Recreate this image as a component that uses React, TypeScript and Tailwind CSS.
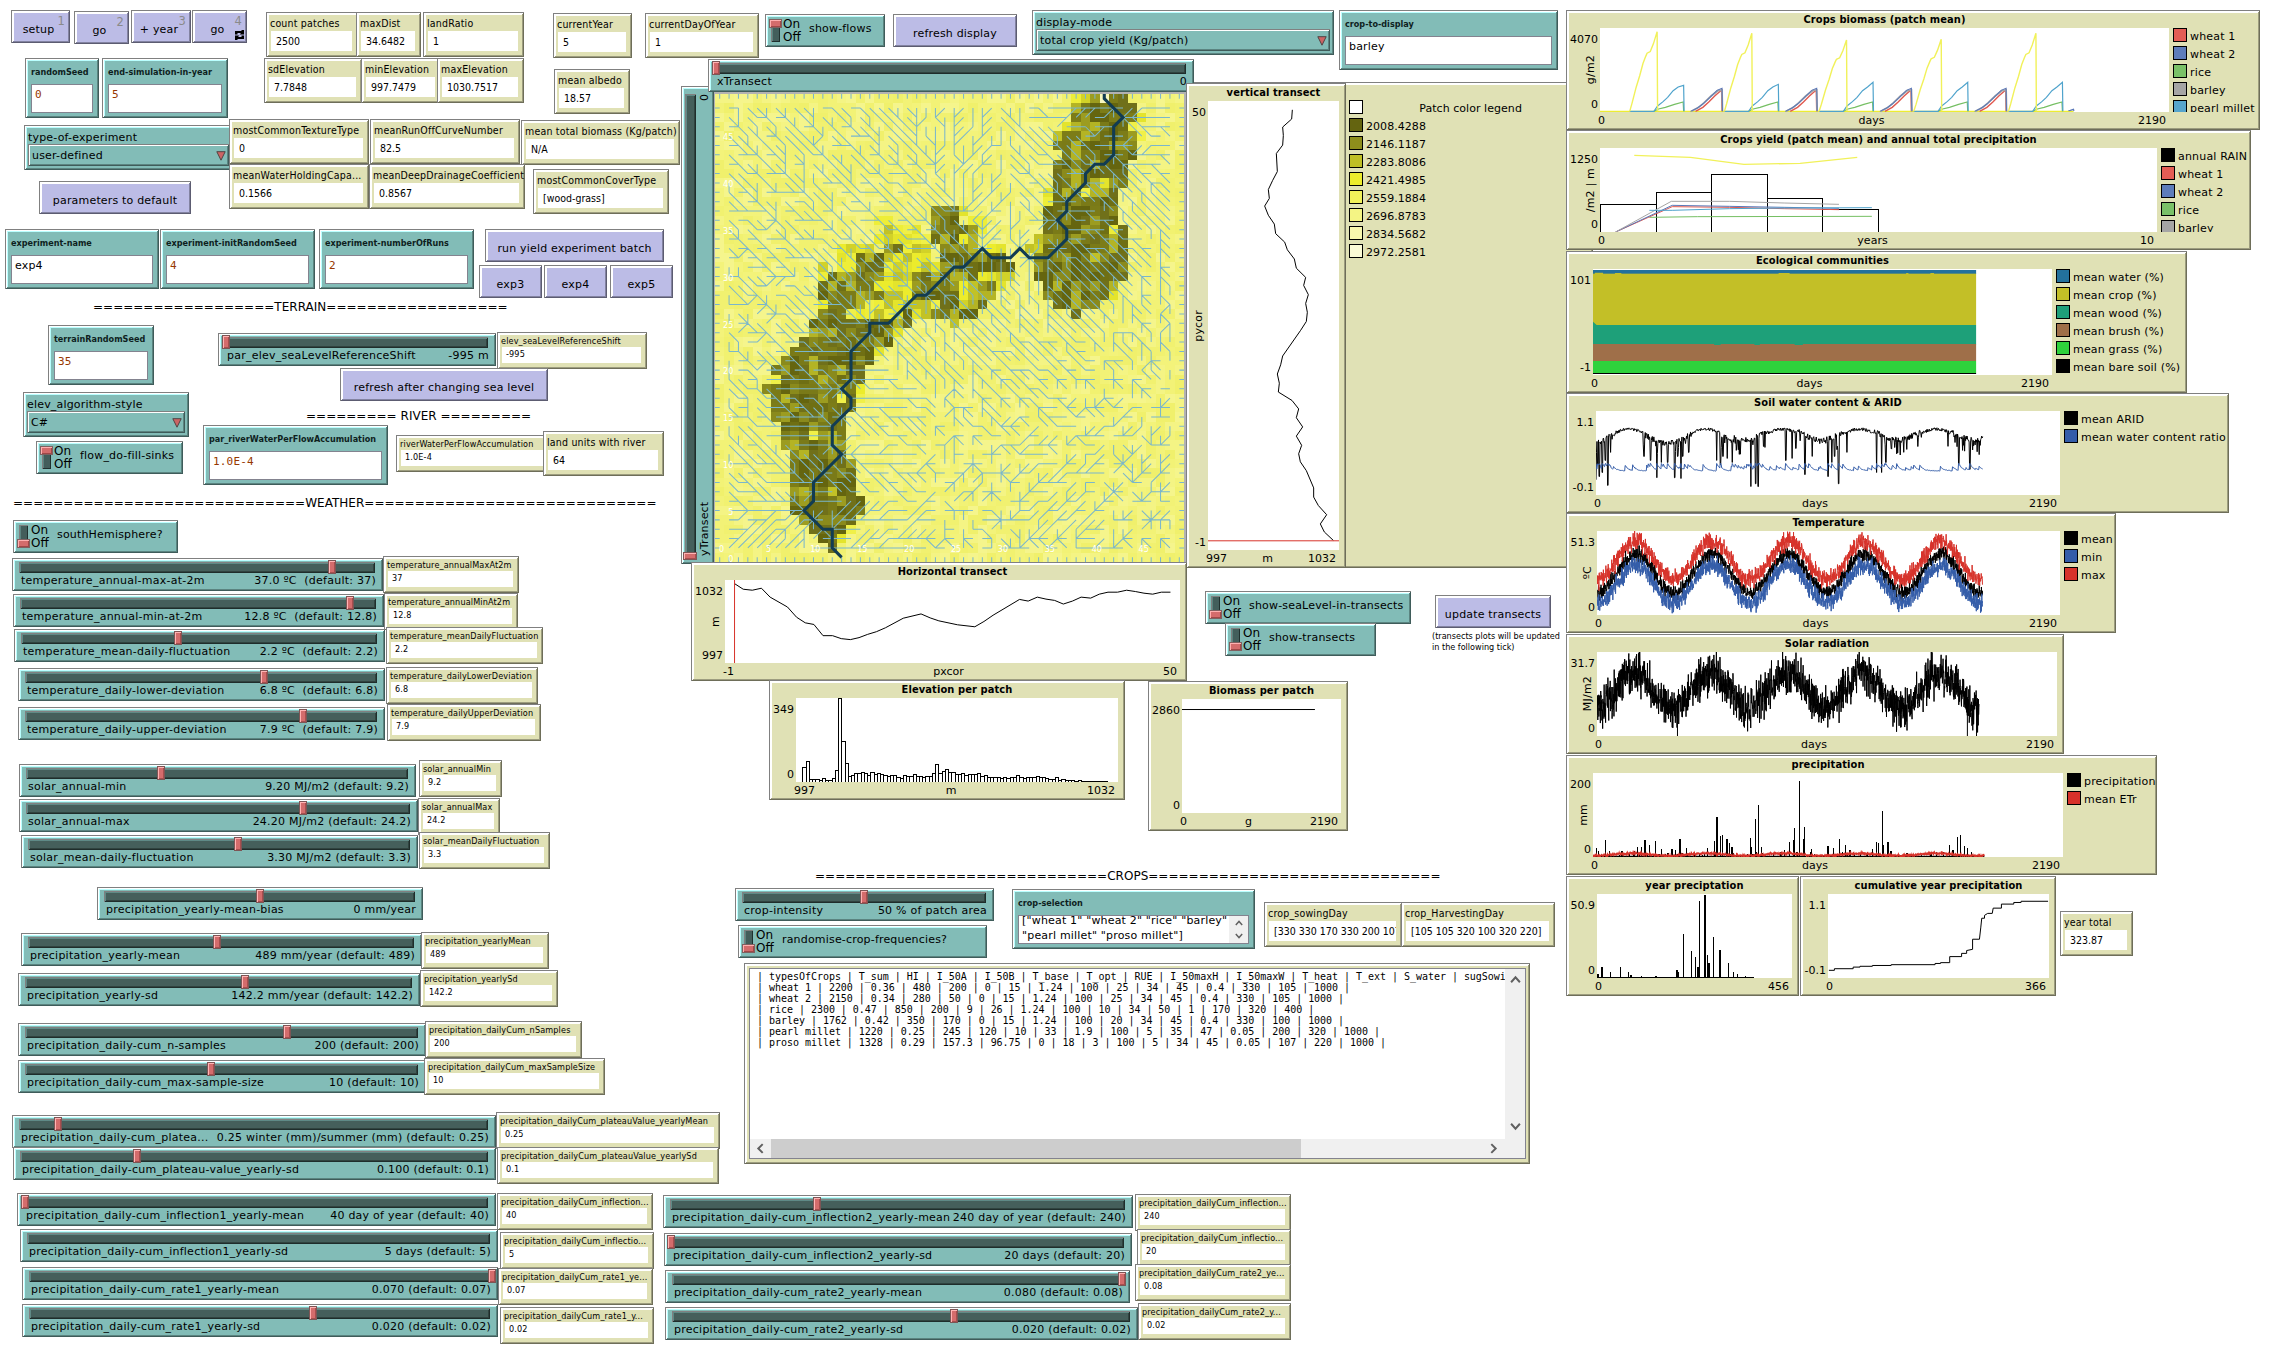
import React from "react";

const TEAL =
  "absolute bg-[#82bcb7] shadow-[inset_1px_1px_0_#808080,inset_-1px_-1px_0_#3f5c5a,inset_2px_2px_0_#ffffff,inset_-2px_-2px_0_#5b8480,inset_3px_3px_0_#baffff]";
const LILAC =
  "absolute bg-[#bcbce6] shadow-[inset_1px_1px_0_#808080,inset_-1px_-1px_0_#5c5c71,inset_2px_2px_0_#ffffff,inset_-2px_-2px_0_#8383a1,inset_3px_3px_0_#ffffff]";
const SAND =
  "absolute bg-[#e0e1b5] shadow-[inset_1px_1px_0_#808080,inset_-1px_-1px_0_#6e6e59,inset_2px_2px_0_#ffffff,inset_-2px_-2px_0_#9d9d7f,inset_3px_3px_0_#ffffff]";

type Kids = { children?: React.ReactNode };

function Button({ at, label, hotkey, loop }: { at: string; label: string; hotkey?: string; loop?: boolean }) {
  return (
    <div className={`${LILAC} ${at} flex items-center justify-center whitespace-nowrap pt-[7px]`}>
      <span className={hotkey ? "pr-1" : ""}>{label}</span>
      {hotkey && <span className="absolute right-[5px] top-[4px] text-[11.5px] text-[#8a8a8a]">{hotkey}</span>}
      {loop && (
        <svg className="absolute right-[3px] top-[20px] h-[10px] w-[9px]" viewBox="0 0 9 10">
          <path d="M0 1H6L7 0H9V4.5H4.6L6 3H2.5V4.5H0ZM9 9H3L2 10H0V5.5H4.4L3 7H6.5V5.5H9Z" fill="#000" />
        </svg>
      )}
    </div>
  );
}

function Monitor({ at, label, value, small }: { at: string; label: string; value: string; small?: boolean }) {
  return (
    <div
      className={`${SAND} ${at} flex flex-col overflow-hidden whitespace-nowrap pl-[5px] pr-[6px] font-['DejaVu_Sans_Condensed'] ${
        small ? "pt-[4px] text-[9px] leading-[11px] tracking-[0.15px]" : "pt-[4px] text-[10.5px] leading-[15px]"
      }`}
    >
      <div className={`-ml-px ${small ? "" : "tracking-[0.2px]"}`}>{label}</div>
      <div
        className={`overflow-hidden bg-white ${
          small ? "h-[16px] pl-[4px] pt-[2px]" : "h-[20px] pl-[5px] pt-[3px] tracking-normal"
        }`}
      >
        {value}
      </div>
    </div>
  );
}

function Input({ at, label, value, num }: { at: string; label: string; value: string; num?: boolean }) {
  return (
    <div className={`${TEAL} ${at} flex flex-col px-[6px] pb-[5px]`}>
      <div className="h-[26px] whitespace-nowrap pt-[8px] font-['DejaVu_Sans_Condensed'] text-[9px] font-bold leading-[13px] tracking-normal text-[#0e1f1e]">
        {label}
      </div>
      <div
        className={`flex-1 border border-[#83838f] bg-white pl-[3px] pt-[2px] leading-[15px] ${
          num ? "font-['DejaVu_Sans_Mono'] text-[11px] text-[#963700]" : "text-[11px]"
        }`}
      >
        {value}
      </div>
    </div>
  );
}

function Chooser({ at, label, value }: { at: string; label: string; value: string }) {
  return (
    <div className={`${TEAL} ${at} flex flex-col px-[4px] pb-[4px] pt-[5px]`}>
      <div className="h-[14px] leading-[16px]">{label}</div>
      <div className="flex flex-1 items-center justify-between pl-[4px] pr-[3px] pt-px shadow-[inset_1px_1px_0_#808080,inset_-1px_-1px_0_#3f5c5a,inset_2px_2px_0_#ffffff,inset_-2px_-2px_0_#5b8480]">
        <span>{value}</span>
        <svg className="h-[10px] w-[10px]" viewBox="0 0 10 10">
          <path d="M0.8 0.7H9.2L5 9.2Z" fill="#cc6464" stroke="#4f4444" strokeWidth="1" />
        </svg>
      </div>
    </div>
  );
}

function Switch({ at, label, on }: { at: string; label: string; on?: boolean }) {
  return (
    <div className={`${TEAL} ${at} flex items-center whitespace-nowrap`}>
      <div className="relative ml-[6px] h-[23px] w-[9px] bg-[#435e5b] shadow-[inset_1px_1px_0_#808080,inset_-1px_-1px_0_#20302e,inset_2px_0_0_#5b8480]">
        <div
          className={`absolute -left-[2px] h-[9px] w-[13px] border border-[#806060] bg-[#d46c6c] shadow-[inset_1px_1px_0_#ffb0b0,inset_-1px_-1px_0_#a04848] ${
            on ? "top-0" : "bottom-0"
          }`}
        />
      </div>
      <div className="ml-[3px] w-[26px] text-[12px] leading-[13px] tracking-normal">
        <div>On</div>
        <div>Off</div>
      </div>
      <span className="-mt-[3px]">{label}</span>
    </div>
  );
}

function Slider({ at, label, value, knob }: { at: string; label: string; value: string; knob?: number }) {
  return (
    <div className={`${TEAL} ${at} flex flex-col pl-[7px] pr-[8px] pt-[4px]`}>
      <div className="relative h-[11px] bg-[#455f5b] shadow-[inset_1px_1px_0_#808080,inset_-1px_-1px_0_#1f2d2b,inset_2px_2px_0_#5f8a86,inset_-2px_-2px_0_#30433f]">
        {knob !== undefined && (
          <div
            className="absolute -top-[2px] h-[14px] w-[8px] border border-[#7d5555] bg-[#d46c6c] shadow-[inset_1px_1px_0_#ffb4b4,inset_-1px_-1px_0_#a84e4e]"
            style={{ left: knob - 7 }}
          />
        )}
      </div>
      <div className="flex justify-between whitespace-pre pl-[2px] leading-[16px] tracking-[0.25px]">
        <span>{label}</span>
        <span className="-mr-px">{value}</span>
      </div>
    </div>
  );
}

function Swatches({ items, pitch }: { items: [string, string][]; pitch: string }) {
  return (
    <div className="flex h-0 min-h-full flex-col overflow-hidden pl-[4px]">
      {items.map(([c, t]) => (
        <div key={t} className={`flex shrink-0 items-start whitespace-pre ${pitch}`}>
          <span className="h-[14px] w-[14px] shrink-0 border border-black" style={{ backgroundColor: c }} />
          <span className="ml-[3px] mt-[1px] leading-[15px]">{t}</span>
        </div>
      ))}
    </div>
  );
}

type PlotProps = Kids & {
  at: string;
  cols: string;
  title: string;
  y: [string, string, string?];
  x: [string, string, string];
  box: string;
  legend?: [string, string][];
};

function Plot({ at, cols, title, y, x, box, legend, children }: PlotProps) {
  return (
    <div className={`${SAND} ${at} grid grid-rows-[18px_minmax(0,1fr)_18px] ${cols}`}>
      <div />
      <div className="flex items-end justify-center whitespace-nowrap pb-[1px] font-['DejaVu_Sans_Condensed'] text-[11px] font-bold leading-[14px] tracking-[0.1px]">
        {title}
      </div>
      <div />
      <div className="relative flex flex-col items-end justify-between whitespace-nowrap pr-[2px] pt-[5px] leading-[14px] tracking-normal">
        <span>{y[0]}</span>
        {y[2] && (
          <div className="absolute inset-y-[14px] right-[3px] flex items-center justify-center">
            <span className="rotate-180 leading-[12px] tracking-[0.2px] [writing-mode:vertical-rl]">{y[2]}</span>
          </div>
        )}
        <span>{y[1]}</span>
      </div>
      <svg className="h-full w-full bg-white" viewBox={box} preserveAspectRatio="none">
        {children}
      </svg>
      {legend ? <Swatches items={legend} pitch="h-[18px]" /> : <div />}
      <div />
      <div className="-ml-[2px] flex justify-between pr-[3px] pt-[2px] leading-[14px] tracking-normal">
        <span>{x[0]}</span>
        <span>{x[1]}</span>
        <span>{x[2]}</span>
      </div>
      <div />
    </div>
  );
}

function Pen({ pts, c = "#000", w = 1 }: { pts: string; c?: string; w?: number }) {
  return <polyline points={pts} fill="none" stroke={c} strokeWidth={w} vectorEffect="non-scaling-stroke" />;
}

function Bars({ list, base }: { list: number[][]; base: number }) {
  return (
    <g shapeRendering="crispEdges">
      {list.map(([x, y], i) => (
        <line key={i} x1={x} x2={x} y1={base} y2={y} stroke="#000" strokeWidth="1.4" vectorEffect="non-scaling-stroke" />
      ))}
    </g>
  );
}

function rng(seed: number) {
  let s = seed;
  return () => {
    s = (s * 1664525 + 1013904223) % 4294967296;
    return s / 4294967296;
  };
}

/* ---------- series ---------- */

function season(seed: number, x0: number, x1: number, peak: number, mid: number, amp: number, noise: number) {
  const r = rng(seed);
  const out: string[] = [];
  const n = 1825;
  for (let i = 0; i < n; i++) {
    const x = x0 + ((x1 - x0) * i) / n;
    const e = (r() + r() + r() - 1.5) * noise;
    out.push(`${x.toFixed(1)},${(mid - amp * Math.cos(((x - peak) / 167) * 2 * Math.PI) + e).toFixed(1)}`);
  }
  return out.join(" ");
}

const ARID_DROPS: number[][] = [
  [78, 248], [82, 210], [85, 240], [92, 230], [98, 200], [104, 262], [110, 180], [183, 190], [197, 200], [211, 243],
  [221, 205], [235, 205], [250, 243], [257, 190], [264, 245], [268, 190], [281, 180], [342, 200], [350, 210],
  [356, 190], [365, 195], [376, 205], [385, 175], [417, 265], [427, 258], [433, 265], [445, 165], [493, 200],
  [507, 195], [515, 170], [535, 235], [551, 190], [586, 240], [594, 205], [600, 190], [609, 258], [627, 180],
  [692, 230], [703, 230], [712, 205], [848, 165], [872, 208], [880, 175], [896, 222],
];

function arid() {
  const r = rng(5);
  const p: string[] = [];
  for (let x = 78; x < 924; x += 1.1) {
    const s = Math.cos(((x - 150) / 168) * 2 * Math.PI);
    const wet = s < 0.4;
    let y = 134 - 16 * s + (wet && x > 380 ? -8 : 0) + r() * (wet ? 14 : 8);
    if (wet && r() > 0.85) y += r() * 40;
    for (const [dx, dy] of ARID_DROPS) if (Math.abs(dx - x) < 0.9) y = dy;
    p.push(`${x.toFixed(1)},${y.toFixed(1)}`);
  }
  return p.join(" ");
}

function moisture() {
  const r = rng(9);
  const p: string[] = [];
  let v = 14;
  for (let x = 78; x < 924; x += 1.1) {
    const s = Math.cos(((x - 150) / 168) * 2 * Math.PI);
    v *= 0.86;
    if (r() > (s > 0.3 ? 0.95 : 0.86)) v = 6 + r() * 12;
    for (const [dx, dy] of ARID_DROPS) if (dy > 195 && Math.abs(dx - x) < 0.9) v = 18;
    p.push(`${x.toFixed(1)},${(227 - v - r() * 2).toFixed(1)}`);
  }
  return p.join(" ");
}

const RAIN: number[][] = [
  [80, 1165], [84, 1172], [99, 1145], [108, 1172], [135, 1172], [163, 1172], [169, 1163], [178, 1162], [186, 1145],
  [196, 1157], [209, 1147], [222, 1168], [245, 1168], [253, 1170], [262, 1142], [277, 1165], [322, 1165], [338, 1147],
  [342, 1088], [344, 1088], [351, 1135], [355, 1132], [365, 1142], [371, 1153], [376, 1162], [417, 1140], [419, 1163],
  [427, 1093], [434, 1058], [441, 1162], [491, 1170], [502, 1150], [511, 1145], [513, 1115], [524, 998], [532, 1142],
  [535, 1113], [550, 1168], [586, 1160], [598, 1165], [611, 1142], [624, 1158], [634, 1170], [683, 1167], [692, 1150],
  [696, 1152], [705, 1073], [708, 1157], [717, 1150], [724, 1172], [852, 1157], [859, 1170], [869, 1137], [876, 1132],
  [884, 1160], [891, 1165], [900, 1174],
];

function drizzle() {
  const r = rng(21);
  const out: number[][] = [];
  for (let x = 74; x < 920; x += 5 + r() * 12) out.push([x, 1186 - r() * 12]);
  return out;
}

const ELEVATION = [
  651, 633, 688, 688, 688, 691, 685, 691, 691, 685, 660, 444, 573, 640, 679, 676, 670, 669, 666, 669, 675, 666, 672,
  670, 673, 676, 679, 676, 676, 682, 685, 676, 679, 679, 673, 679, 680, 682, 679, 679, 670, 643, 670, 664, 657, 666,
  668, 672, 673, 670, 675, 673, 673, 673, 670, 679, 677, 681, 682, 682, 682, 685, 682, 686, 682, 682, 676, 681, 685,
  682, 681, 681, 679, 682, 681, 686, 687, 687, 682, 691, 687, 690, 691, 691, 693, 690, 693, 694, 694, 694, 694, 694,
  694, 694,
];

const GROW_PEAKS = [95, 100, 120, 118, 100];

function CropBiomass() {
  return (
    <>
      <Pen c="#eded31" pts="87,334 1123,334" w={1.4} />
      {GROW_PEAKS.map((p, k) => {
        const d = k * 207.2;
        const at = (l: number[][]) => l.map(([x, y]) => `${x + d},${y}`).join(" ");
        const q = (f: number) => 334 - (334 - p) * f;
        return (
          <g key={k}>
            {k < 4 && (
              <>
                <Pen c="#e0584f" w={1.4} pts={at([[296, 334], [312, 322], [325, 306], [338, 288], [353, 270], [354, 334]])} />
                <Pen c="#a5a5a5" w={1.8} pts={at([[287, 334], [303, 322], [315, 308], [330, 288], [345, 272], [354, 270], [355, 334]])} />
                <Pen c="#5a78b8" w={1} pts={at([[285, 334], [300, 324], [312, 312], [327, 293], [343, 271], [354, 265], [355, 334]])} />
              </>
            )}
            <Pen c="#75bf63" w={1.2} pts={at([[205, 334], [215, 327], [230, 322], [250, 313], [269, 306], [270, 334]])} />
            <Pen c="#4fa3cc" w={1.2} pts={at([[152, 334], [205, 334], [213, 318], [225, 305], [235, 292], [247, 272], [258, 261], [270, 256 - (k > 1 ? 9 : k * 3)], [271, 334]])} />
            <Pen c="#f1f15a" w={1.4} pts={at([[152, 334], [157, q(0.1)], [166, q(0.3)], [174, q(0.45)], [181, q(0.6)], [187, q(0.69)], [190, q(0.73)], [197, q(0.75)], [204, q(0.85)], [212, q(1)], [213, 334]])} />
          </g>
        );
      })}
      <Pen c="#5a78b8" w={1.2} pts="1112,332 1116,331 1123,328 1124,333" />
    </>
  );
}

/* ---------- world view ---------- */

const RIVER: number[][] = [
  [41, -0.5], [41, 0], [43, 2], [42, 3], [42, 6], [41, 7], [40, 7], [39, 8], [39, 9], [37, 11], [37, 12], [36, 13],
  [37, 14], [37, 15], [35, 17], [33, 17], [32, 16], [31, 17], [29, 17], [28, 16], [26, 18], [25, 18], [22, 21],
  [21, 21], [18, 24], [16, 24], [16, 25], [14, 27], [14, 30], [13, 31], [14, 32], [14, 33], [12, 35], [12, 37],
  [13, 38], [10, 41], [10, 43], [9, 44], [11, 46], [12, 46], [12, 48], [13, 49],
];

const COVER: Record<number, string> = {
  0: "y38-39 d40-40 w41-41 d42-43",
  1: "d38-44",
  2: "d38-44 y45-45",
  3: "y37-37 d38-43 y44-44",
  4: "y36-36 d37-44 y45-45",
  5: "d36-44",
  6: "d37-44",
  7: "d36-43",
  8: "d36-43",
  9: "d36-43 y41-41",
  10: "y35-35 d36-42 y39-39",
  11: "y35-35 d36-42",
  12: "d23-25 d35-42 y26-26",
  13: "y17-18 d23-25 y27-28 d35-42",
  14: "y18-21 d23-27 y28-28 d35-43 y42-42",
  15: "y17-22 d23-27 y26-26 y34-34 d35-43",
  16: "y13-16 d18-19 y20-22 d24-27 y29-30 y33-34 d35-43",
  17: "y13-14 d15-17 y18-22 d24-30 d34-43 y40-40",
  18: "y11-11 y13-14 d15-17 y18-23 d24-31 d34-43",
  19: "y11-11 d12-17 y18-20 d21-27 y28-31 d34-43",
  20: "d11-16 y17-20 d21-25 y26-27 d28-29 y30-30 d35-42",
  21: "d11-17 y18-20 d21-25 y26-27 d28-29 d35-42 y42-42",
  22: "y11-11 d12-15 y16-23 d24-25 y26-26 d27-28 d36-40",
  23: "d11-13 y14-19 d20-20 y21-22 d23-27 d38-38",
  24: "d10-20 y25-25",
  25: "d10-18 y19-19",
  26: "d9-18",
  27: "d8-16 y17-17",
  28: "d7-16",
  29: "d6-15",
  30: "y6-6 d7-15",
  31: "d5-14 y15-15",
  32: "d6-14 y15-15 y13-13",
  33: "d6-14",
  34: "d6-13",
  35: "d7-13",
  36: "d7-13 y10-10",
  37: "d7-13",
  38: "d8-13",
  39: "d8-14",
  40: "d8-14",
  41: "d8-14",
  42: "d8-14 y12-12",
  43: "d8-15",
  44: "d8-15",
  45: "d9-14",
  46: "d10-13 y14-14",
  47: "d11-12 y13-13",
  48: "d12-12",
};

const PALE = ["#f3f37a", "#f4f484", "#f1f170", "#f5f58c", "#f2f276", "#f0f06c"];
const DARK = ["#65650f", "#6f6f14", "#7a7a18", "#65650f", "#8a8a1c", "#7c7c18", "#9c9c20", "#70701a", "#b4b424"];
const BRIGHT = ["#ecec2c", "#e4e42c", "#f0f048", "#d2d228", "#c2c226", "#eeee38"];

function buildWorld() {
  const r = rng(77);
  const cells: { x: number; y: number; c: string }[] = [];
  for (let y = 0; y < 50; y++)
    for (let x = 0; x < 50; x++) {
      let c = PALE[Math.floor(r() * PALE.length)];
      for (const span of (COVER[y] ?? "").split(" ")) {
        const m = /^([dyw])(\d+)-(\d+)$/.exec(span);
        if (!m || x < +m[2] || x > +m[3]) continue;
        const set = m[1] === "d" ? DARK : m[1] === "y" ? BRIGHT : ["#f8f8c0"];
        c = set[Math.floor(r() * set.length)];
      }
      cells.push({ x, y, c });
    }

  const main: number[][] = [];
  for (let i = 1; i < RIVER.length; i++) {
    const [a, b] = [RIVER[i - 1], RIVER[i]];
    const n = Math.max(Math.abs(a[0] - b[0]), Math.abs(a[1] - b[1]), 1);
    for (let k = 0; k <= n; k++) main.push([a[0] + ((b[0] - a[0]) * k) / n, a[1] + ((b[1] - a[1]) * k) / n]);
  }
  const n2 = rng(12);
  const waves = Array.from({ length: 7 }, () => [n2() * 0.8 - 0.3, n2() * 0.8 - 0.3, n2() * 6.3, 0.7 + n2() * 1.2]);
  const elev: number[][] = [];
  for (let y = 0; y < 50; y++) {
    elev.push([]);
    for (let x = 0; x < 50; x++) {
      let d = 99;
      for (const [mx, my] of main) d = Math.min(d, Math.hypot(mx - x, my - y));
      let h = Math.min(d, 6 + d * 0.25) + n2() * 0.6;
      for (const [fx, fy, ph, am] of waves) h += am * 0.6 * Math.sin(fx * x + fy * y + ph) * Math.min(1, d / 5);
      elev[y].push(h);
    }
  }
  let d = "";
  for (let y = 0; y < 50; y++)
    for (let x = 0; x < 50; x++) {
      const cx = x + 0.5;
      const cy = y + 0.5;
      if (y === 0 || y === 49) {
        d += `M${cx} ${cy}V${y === 0 ? 0 : 50}`;
        continue;
      }
      if (x === 0 || x === 49) {
        d += `M${cx} ${cy}H${x === 0 ? 0 : 50}`;
        continue;
      }
      let best = elev[y][x];
      let to = [0, 0];
      for (let dy = -1; dy <= 1; dy++)
        for (let dx = -1; dx <= 1; dx++) {
          const diag = dx && dy ? 0.72 : 1;
          const edge = x + dx === 0 || x + dx === 49 || y + dy === 0 || y + dy === 49 ? 2 : 0;
          const e = elev[y][x] + (elev[y + dy][x + dx] - elev[y][x]) * diag + edge;
          if (e < best) {
            best = e;
            to = [dx, dy];
          }
        }
      if (to[0] || to[1]) d += `M${cx} ${cy}l${to[0]} ${to[1]}`;
    }
  return { cells, flows: d };
}

const WORLD = buildWorld();

function World() {
  const ticks = [0, 5, 10, 15, 20, 25, 30, 35, 40, 45];
  return (
    <div className="absolute left-[713px] top-[92px] h-[472px] w-[473px] border-2 border-[#b2b2b2]">
      <svg className="h-full w-full" viewBox="0 0 50 50" preserveAspectRatio="none">
        <g shapeRendering="crispEdges">
          {WORLD.cells.map((p) => (
            <rect key={`${p.x}-${p.y}`} x={p.x} y={p.y} width="1.02" height="1.02" fill={p.c} />
          ))}
        </g>
        <path d={WORLD.flows} fill="none" stroke="#7ab6cc" strokeWidth="0.11" />
        <polyline
          points={RIVER.map(([x, y]) => `${x + 0.5},${y + 0.5}`).join(" ")}
          fill="none"
          stroke="#123c52"
          strokeWidth="0.33"
        />
        <g fill="#fff" fontFamily="DejaVu Sans Condensed" fontSize="0.95" letterSpacing="0">
          {ticks.map((t) => (
            <text key={`x${t}`} x={t + 0.7} y="48.95" textAnchor="middle">
              {t}
            </text>
          ))}
          {ticks.map((t) => (
            <text key={`y${t}`} x="1.95" y={49.95 - t} textAnchor="end">
              {t}
            </text>
          ))}
        </g>
      </svg>
    </div>
  );
}

function Chevron({ d, cls }: { d: string; cls: string }) {
  return (
    <svg className={cls} viewBox="0 0 10 10">
      <path d={d} fill="none" stroke="#606060" strokeWidth="1.8" />
    </svg>
  );
}
const UP = "M1 7.5L5 3L9 7.5";
const DOWN = "M1 2.5L5 7L9 2.5";
const LEFT = "M7 1L3 5L7 9";
const RIGHT = "M3 1L7 5L3 9";

const TABLE = [
  "| typesOfCrops | T_sum | HI | I_50A | I_50B | T_base | T_opt | RUE | I_50maxH | I_50maxW | T_heat | T_ext | S_water | sugSowingDay",
  "| wheat 1 | 2200 | 0.36 | 480 | 200 | 0 | 15 | 1.24 | 100 | 25 | 34 | 45 | 0.4 | 330 | 105 | 1000 |",
  "| wheat 2 | 2150 | 0.34 | 280 | 50 | 0 | 15 | 1.24 | 100 | 25 | 34 | 45 | 0.4 | 330 | 105 | 1000 |",
  "| rice | 2300 | 0.47 | 850 | 200 | 9 | 26 | 1.24 | 100 | 10 | 34 | 50 | 1 | 170 | 320 | 400 |",
  "| barley | 1762 | 0.42 | 350 | 170 | 0 | 15 | 1.24 | 100 | 20 | 34 | 45 | 0.4 | 330 | 100 | 1000 |",
  "| pearl millet | 1220 | 0.25 | 245 | 120 | 10 | 33 | 1.9 | 100 | 5 | 35 | 47 | 0.05 | 200 | 320 | 1000 |",
  "| proso millet | 1328 | 0.29 | 157.3 | 96.75 | 0 | 18 | 3 | 100 | 5 | 34 | 45 | 0.05 | 107 | 220 | 1000 |",
];

function Output() {
  return (
    <div className={`${SAND} left-[744px] top-[963px] h-[201px] w-[786px] p-[5px] pr-[4px]`}>
      <div className="flex h-full border border-[#83838f] bg-white">
        <div className="flex min-w-0 flex-1 flex-col">
          <div className="flex-1 overflow-hidden whitespace-pre pl-[7px] pt-[2px] font-['DejaVu_Sans_Mono'] text-[10px] leading-[11px] tracking-[-0.03px]">
            {TABLE.map((l) => (
              <div key={l}>{l}</div>
            ))}
          </div>
          <div className="flex h-[19px] items-center bg-[#f0f0f0]">
            <Chevron d={LEFT} cls="mx-[5px] h-[11px] w-[11px]" />
            <div className="h-full w-[530px] bg-[#cdcdcd]" />
            <Chevron d={RIGHT} cls="ml-auto mr-[6px] h-[11px] w-[11px]" />
          </div>
        </div>
        <div className="flex w-[20px] flex-col items-center justify-between bg-[#f0f0f0] pb-[26px] pt-[5px]">
          <Chevron d={UP} cls="h-[11px] w-[11px]" />
          <Chevron d={DOWN} cls="h-[11px] w-[11px]" />
        </div>
      </div>
    </div>
  );
}

function CropSelection() {
  return (
    <div className={`${TEAL} left-[1012px] top-[889px] h-[60px] w-[243px] flex flex-col px-[6px] pb-[5px]`}>
      <div className="h-[26px] pt-[8px] font-['DejaVu_Sans_Condensed'] text-[9px] font-bold leading-[13px] tracking-normal text-[#0e1f1e]">
        crop-selection
      </div>
      <div className="flex flex-1 overflow-hidden border border-[#83838f] bg-white">
        <div className="h-[27px] flex-1 overflow-hidden whitespace-nowrap pl-[3px] leading-[15px]">
          <div className="-mt-[3px]">["wheat 1" "wheat 2" "rice" "barley"</div>
          <div>"pearl millet" "proso millet"]</div>
        </div>
        <div className="flex w-[19px] flex-col items-center justify-between bg-[#f0f0f0] py-[3px]">
          <Chevron d={UP} cls="h-[8px] w-[8px]" />
          <Chevron d={DOWN} cls="h-[8px] w-[8px]" />
        </div>
      </div>
    </div>
  );
}

const BUTTONS = [
  { at: "left-[11px] top-[10px] w-[59px] h-[33px]", label: "setup", hotkey: "1" },
  { at: "left-[74px] top-[11px] w-[55px] h-[33px]", label: "go", hotkey: "2" },
  { at: "left-[131px] top-[10px] w-[60px] h-[33px]", label: "+ year", hotkey: "3" },
  { at: "left-[192px] top-[10px] w-[55px] h-[33px]", label: "go", hotkey: "4", loop: true },
  { at: "left-[39px] top-[181px] w-[152px] h-[33px]", label: "parameters to default" },
  { at: "left-[485px] top-[229px] w-[179px] h-[33px]", label: "run yield experiment batch" },
  { at: "left-[479px] top-[265px] w-[63px] h-[33px]", label: "exp3" },
  { at: "left-[544px] top-[265px] w-[63px] h-[33px]", label: "exp4" },
  { at: "left-[610px] top-[265px] w-[63px] h-[33px]", label: "exp5" },
  { at: "left-[340px] top-[368px] w-[208px] h-[33px]", label: "refresh after changing sea level" },
  { at: "left-[893px] top-[14px] w-[124px] h-[33px]", label: "refresh display" },
  { at: "left-[1435px] top-[595px] w-[116px] h-[33px]", label: "update transects" },
];

const INPUTS = [
  { at: "left-[25px] top-[58px] w-[74px] h-[60px]", label: "randomSeed", value: "0", num: true },
  { at: "left-[102px] top-[58px] w-[126px] h-[60px]", label: "end-simulation-in-year", value: "5", num: true },
  { at: "left-[5px] top-[229px] w-[154px] h-[60px]", label: "experiment-name", value: "exp4" },
  { at: "left-[160px] top-[229px] w-[155px] h-[60px]", label: "experiment-initRandomSeed", value: "4", num: true },
  { at: "left-[319px] top-[229px] w-[155px] h-[60px]", label: "experiment-numberOfRuns", value: "2", num: true },
  { at: "left-[48px] top-[325px] w-[106px] h-[60px]", label: "terrainRandomSeed", value: "35", num: true },
  { at: "left-[203px] top-[425px] w-[185px] h-[60px]", label: "par_riverWaterPerFlowAccumulation", value: "1.0E-4", num: true },
  { at: "left-[1339px] top-[10px] w-[219px] h-[60px]", label: "crop-to-display", value: "barley" },
];

const MONITORS = [
  { at: "left-[266px] top-[12px] w-[92px] h-[45px]", label: "count patches", value: "2500" },
  { at: "left-[356px] top-[12px] w-[65px] h-[45px]", label: "maxDist", value: "34.6482" },
  { at: "left-[423px] top-[12px] w-[101px] h-[45px]", label: "landRatio", value: "1" },
  { at: "left-[264px] top-[58px] w-[98px] h-[45px]", label: "sdElevation", value: "7.7848" },
  { at: "left-[361px] top-[58px] w-[80px] h-[45px]", label: "minElevation", value: "997.7479" },
  { at: "left-[437px] top-[58px] w-[87px] h-[45px]", label: "maxElevation", value: "1030.7517" },
  { at: "left-[553px] top-[13px] w-[79px] h-[45px]", label: "currentYear", value: "5" },
  { at: "left-[645px] top-[13px] w-[114px] h-[45px]", label: "currentDayOfYear", value: "1" },
  { at: "left-[554px] top-[69px] w-[76px] h-[45px]", label: "mean albedo", value: "18.57" },
  { at: "left-[229px] top-[119px] w-[140px] h-[45px]", label: "mostCommonTextureType", value: "0" },
  { at: "left-[370px] top-[119px] w-[150px] h-[45px]", label: "meanRunOffCurveNumber", value: "82.5" },
  { at: "left-[521px] top-[120px] w-[159px] h-[45px]", label: "mean total biomass (Kg/patch)", value: "N/A" },
  { at: "left-[229px] top-[164px] w-[140px] h-[45px]", label: "meanWaterHoldingCapa...", value: "0.1566" },
  { at: "left-[369px] top-[164px] w-[156px] h-[45px]", label: "meanDeepDrainageCoefficient", value: "0.8567" },
  { at: "left-[533px] top-[169px] w-[136px] h-[45px]", label: "mostCommonCoverType", value: "[wood-grass]" },
  { at: "left-[497px] top-[332px] w-[150px] h-[37px]", label: "elev_seaLevelReferenceShift", value: "-995", small: true },
  { at: "left-[396px] top-[435px] w-[154px] h-[37px]", label: "riverWaterPerFlowAccumulation", value: "1.0E-4", small: true },
  { at: "left-[543px] top-[431px] w-[121px] h-[45px]", label: "land units with river", value: "64" },
  { at: "left-[383px] top-[556px] w-[136px] h-[37px]", label: "temperature_annualMaxAt2m", value: "37", small: true },
  { at: "left-[384px] top-[593px] w-[134px] h-[37px]", label: "temperature_annualMinAt2m", value: "12.8", small: true },
  { at: "left-[386px] top-[627px] w-[157px] h-[37px]", label: "temperature_meanDailyFluctuation", value: "2.2", small: true },
  { at: "left-[386px] top-[667px] w-[152px] h-[37px]", label: "temperature_dailyLowerDeviation", value: "6.8", small: true },
  { at: "left-[387px] top-[704px] w-[154px] h-[37px]", label: "temperature_dailyUpperDeviation", value: "7.9", small: true },
  { at: "left-[419px] top-[760px] w-[83px] h-[37px]", label: "solar_annualMin", value: "9.2", small: true },
  { at: "left-[418px] top-[798px] w-[82px] h-[37px]", label: "solar_annualMax", value: "24.2", small: true },
  { at: "left-[419px] top-[832px] w-[131px] h-[37px]", label: "solar_meanDailyFluctuation", value: "3.3", small: true },
  { at: "left-[421px] top-[932px] w-[128px] h-[37px]", label: "precipitation_yearlyMean", value: "489", small: true },
  { at: "left-[420px] top-[970px] w-[138px] h-[37px]", label: "precipitation_yearlySd", value: "142.2", small: true },
  { at: "left-[425px] top-[1021px] w-[157px] h-[37px]", label: "precipitation_dailyCum_nSamples", value: "200", small: true },
  { at: "left-[424px] top-[1058px] w-[181px] h-[37px]", label: "precipitation_dailyCum_maxSampleSize", value: "10", small: true },
  { at: "left-[496px] top-[1112px] w-[224px] h-[37px]", label: "precipitation_dailyCum_plateauValue_yearlyMean", value: "0.25", small: true },
  { at: "left-[497px] top-[1147px] w-[222px] h-[37px]", label: "precipitation_dailyCum_plateauValue_yearlySd", value: "0.1", small: true },
  { at: "left-[497px] top-[1193px] w-[156px] h-[37px]", label: "precipitation_dailyCum_inflection...", value: "40", small: true },
  { at: "left-[500px] top-[1232px] w-[154px] h-[37px]", label: "precipitation_dailyCum_inflectio...", value: "5", small: true },
  { at: "left-[498px] top-[1268px] w-[155px] h-[37px]", label: "precipitation_dailyCum_rate1_ye...", value: "0.07", small: true },
  { at: "left-[500px] top-[1307px] w-[154px] h-[37px]", label: "precipitation_dailyCum_rate1_y...", value: "0.02", small: true },
  { at: "left-[1135px] top-[1194px] w-[156px] h-[37px]", label: "precipitation_dailyCum_inflection...", value: "240", small: true },
  { at: "left-[1137px] top-[1229px] w-[154px] h-[37px]", label: "precipitation_dailyCum_inflectio...", value: "20", small: true },
  { at: "left-[1135px] top-[1264px] w-[156px] h-[37px]", label: "precipitation_dailyCum_rate2_ye...", value: "0.08", small: true },
  { at: "left-[1138px] top-[1303px] w-[153px] h-[37px]", label: "precipitation_dailyCum_rate2_y...", value: "0.02", small: true },
  { at: "left-[1264px] top-[902px] w-[138px] h-[45px]", label: "crop_sowingDay", value: "[330 330 170 330 200 107]" },
  { at: "left-[1401px] top-[902px] w-[154px] h-[45px]", label: "crop_HarvestingDay", value: "[105 105 320 100 320 220]" },
  { at: "left-[2060px] top-[911px] w-[73px] h-[45px]", label: "year total", value: "323.87" },
];

const SLIDERS = [
  { at: "left-[218px] top-[333px] w-[278px] h-[33px]", label: "par_elev_seaLevelReferenceShift", value: "-995 m", knob: 4 },
  { at: "left-[12px] top-[558px] w-[371px] h-[33px]", label: "temperature_annual-max-at-2m", value: "37.0 ºC  (default: 37)", knob: 316 },
  { at: "left-[13px] top-[594px] w-[371px] h-[33px]", label: "temperature_annual-min-at-2m", value: "12.8 ºC  (default: 12.8)", knob: 333 },
  { at: "left-[14px] top-[629px] w-[371px] h-[33px]", label: "temperature_mean-daily-fluctuation", value: "2.2 ºC  (default: 2.2)", knob: 160 },
  { at: "left-[18px] top-[668px] w-[367px] h-[33px]", label: "temperature_daily-lower-deviation", value: "6.8 ºC  (default: 6.8)", knob: 242 },
  { at: "left-[18px] top-[707px] w-[367px] h-[33px]", label: "temperature_daily-upper-deviation", value: "7.9 ºC  (default: 7.9)", knob: 281 },
  { at: "left-[19px] top-[764px] w-[397px] h-[33px]", label: "solar_annual-min", value: "9.20 MJ/m2 (default: 9.2)", knob: 138 },
  { at: "left-[19px] top-[799px] w-[399px] h-[33px]", label: "solar_annual-max", value: "24.20 MJ/m2 (default: 24.2)", knob: 280 },
  { at: "left-[21px] top-[835px] w-[397px] h-[33px]", label: "solar_mean-daily-fluctuation", value: "3.30 MJ/m2 (default: 3.3)", knob: 213 },
  { at: "left-[97px] top-[887px] w-[326px] h-[33px]", label: "precipitation_yearly-mean-bias", value: "0 mm/year", knob: 159 },
  { at: "left-[21px] top-[933px] w-[401px] h-[33px]", label: "precipitation_yearly-mean", value: "489 mm/year (default: 489)", knob: 192 },
  { at: "left-[18px] top-[973px] w-[402px] h-[33px]", label: "precipitation_yearly-sd", value: "142.2 mm/year (default: 142.2)", knob: 223 },
  { at: "left-[18px] top-[1023px] w-[408px] h-[33px]", label: "precipitation_daily-cum_n-samples", value: "200 (default: 200)", knob: 265 },
  { at: "left-[18px] top-[1060px] w-[408px] h-[33px]", label: "precipitation_daily-cum_max-sample-size", value: "10 (default: 10)", knob: 189 },
  { at: "left-[12px] top-[1115px] w-[484px] h-[33px]", label: "precipitation_daily-cum_platea...", value: "0.25 winter (mm)/summer (mm) (default: 0.25)", knob: 42 },
  { at: "left-[13px] top-[1147px] w-[483px] h-[33px]", label: "precipitation_daily-cum_plateau-value_yearly-sd", value: "0.100 (default: 0.1)", knob: 120 },
  { at: "left-[17px] top-[1193px] w-[479px] h-[33px]", label: "precipitation_daily-cum_inflection1_yearly-mean", value: "40 day of year (default: 40)", knob: 4 },
  { at: "left-[20px] top-[1229px] w-[478px] h-[33px]", label: "precipitation_daily-cum_inflection1_yearly-sd", value: "5 days (default: 5)" },
  { at: "left-[22px] top-[1267px] w-[476px] h-[33px]", label: "precipitation_daily-cum_rate1_yearly-mean", value: "0.070 (default: 0.07)", knob: 466 },
  { at: "left-[22px] top-[1304px] w-[476px] h-[33px]", label: "precipitation_daily-cum_rate1_yearly-sd", value: "0.020 (default: 0.02)", knob: 287 },
  { at: "left-[663px] top-[1195px] w-[470px] h-[33px]", label: "precipitation_daily-cum_inflection2_yearly-mean", value: "240 day of year (default: 240)", knob: 150 },
  { at: "left-[664px] top-[1233px] w-[468px] h-[33px]", label: "precipitation_daily-cum_inflection2_yearly-sd", value: "20 days (default: 20)", knob: 3 },
  { at: "left-[665px] top-[1270px] w-[465px] h-[33px]", label: "precipitation_daily-cum_rate2_yearly-mean", value: "0.080 (default: 0.08)", knob: 453 },
  { at: "left-[665px] top-[1307px] w-[473px] h-[33px]", label: "precipitation_daily-cum_rate2_yearly-sd", value: "0.020 (default: 0.02)", knob: 285 },
  { at: "left-[735px] top-[888px] w-[259px] h-[33px]", label: "crop-intensity", value: "50 % of patch area", knob: 125 },
];

const SWITCHES = [
  { at: "left-[36px] top-[441px] w-[147px] h-[33px]", label: "flow_do-fill-sinks", on: true },
  { at: "left-[13px] top-[520px] w-[165px] h-[33px]", label: "southHemisphere?" },
  { at: "left-[765px] top-[14px] w-[120px] h-[33px]", label: "show-flows", on: true },
  { at: "left-[1205px] top-[591px] w-[206px] h-[33px]", label: "show-seaLevel-in-transects" },
  { at: "left-[1225px] top-[623px] w-[151px] h-[33px]", label: "show-transects" },
  { at: "left-[738px] top-[925px] w-[249px] h-[33px]", label: "randomise-crop-frequencies?" },
];

const NOTES = [
  { at: "left-[93px] top-[299px]", n: 18, t: "TERRAIN" },
  { at: "left-[306px] top-[408px]", n: 9, t: " RIVER " },
  { at: "left-[13px] top-[495px]", n: 29, t: "WEATHER" },
  { at: "left-[815px] top-[868px]", n: 29, t: "CROPS" },
];

const LEGEND: [string, string][] = [
  ["#ffffff", "               Patch color legend"],
  ["#646410", "2008.4288"],
  ["#8e8e1c", "2146.1187"],
  ["#bfbf25", "2283.8086"],
  ["#ecec2c", "2421.4985"],
  ["#f1f15a", "2559.1884"],
  ["#f4f484", "2696.8783"],
  ["#f7f7ad", "2834.5682"],
  ["#fbfbd6", "2972.2581"],
];

export default function App() {
  return (
    <div className="relative h-[1361px] w-[2277px] overflow-hidden bg-white font-['DejaVu_Sans'] text-[11px] leading-[14px] tracking-[0.18px] text-black">
      <div className={`${SAND} left-[1186px] top-[82px] h-[486px] w-[407px] pl-[159px] pt-[18px] tracking-[0.05px]`}>
        <Swatches items={LEGEND} pitch="h-[18px]" />
      </div>

      {INPUTS.map((p) => <Input key={p.label} {...p} />)}
      <Chooser at="left-[24px] top-[125px] w-[209px] h-[45px]" label="type-of-experiment" value="user-defined" />
      <Chooser at="left-[23px] top-[392px] w-[166px] h-[45px]" label="elev_algorithm-style" value="C#" />
      <Chooser at="left-[1032px] top-[10px] w-[302px] h-[45px]" label="display-mode" value="total crop yield (Kg/patch)" />
      {SLIDERS.map((p) => <Slider key={p.label} {...p} />)}
      {MONITORS.map((p) => <Monitor key={p.at} {...p} />)}
      {BUTTONS.map((p) => <Button key={p.at} {...p} />)}
      {SWITCHES.map((p) => <Switch key={p.label} {...p} />)}
      {NOTES.map((p) => (
        <div key={p.t} className={`absolute ${p.at} whitespace-pre text-[12px] leading-[16px] tracking-[0.02px]`}>
          {"=".repeat(p.n)}
          {p.t}
          {"=".repeat(p.n)}
        </div>
      ))}
      <div className="absolute left-[1432px] top-[631px] whitespace-nowrap font-['DejaVu_Sans_Condensed'] text-[9px] leading-[11px] tracking-normal">
        (transects plots will be updated
        <br />
        in the following tick)
      </div>

      <World />
      <div className={`${TEAL} left-[681px] top-[86px] h-[478px] w-[33px] flex pb-[8px] pl-[4px] pt-[8px]`}>
        <div className="relative w-[11px] bg-[#455f5b] shadow-[inset_1px_1px_0_#808080,inset_-1px_-1px_0_#1f2d2b,inset_2px_2px_0_#5f8a86,inset_-2px_-2px_0_#30433f]">
          <div className="absolute -left-[2px] bottom-[-4px] h-[8px] w-[14px] border border-[#7d5555] bg-[#d46c6c] shadow-[inset_1px_1px_0_#ffb4b4,inset_-1px_-1px_0_#a84e4e]" />
        </div>
        <div className="flex rotate-180 justify-between pr-[1px] leading-[15px] [writing-mode:vertical-rl]">
          <span>yTransect</span>
          <span>0</span>
        </div>
      </div>
      <Slider at="left-[708px] top-[59px] w-[486px] h-[33px]" label="xTransect" value="0" knob={4} />

      <Plot
        at="left-[1186px] top-[83px] h-[485px] w-[160px]"
        cols="grid-cols-[22px_minmax(0,1fr)_7px]"
        title="vertical transect"
        y={["50", "-1", "pycor"]}
        x={["997", "m", "1032"]}
        box="114 82 393 1171"
      >
        <Pen pts="367,105 365,129 338,150 340,172 338,197 319,219 322,266 308,289 295,313 298,336 284,356 295,380 313,403 317,428 344,450 352,470 373,494 379,518 407,542 401,563 415,587 407,610 412,633 409,657 392,680 338,747 332,770 322,794 328,818 325,841 366,863 386,885 379,908 398,932 379,956 395,980 386,1002 391,1023 409,1046 431,1091 431,1115 445,1137 470,1161 451,1185 463,1206 490,1228" />
        <Pen c="#d7322a" pts="114,1229 507,1229" />
      </Plot>
      <Plot
        at="left-[691px] top-[562px] h-[119px] w-[496px]"
        cols="grid-cols-[34px_minmax(0,1fr)_7px]"
        title="Horizontal transect"
        y={["1032", "997", "m"]}
        x={["-1", "pxcor", "50"]}
        box="104 87 1049 252"
      >
        <Pen pts="126,98 146,115 167,118 188,112 208,139 248,169 269,200 289,217 309,222 330,256 352,256 372,265 393,268 413,262 433,252 453,244 474,232 515,203 556,190 577,202 597,211 640,223 680,229 701,213 722,194 783,146 803,151 824,139 844,145 864,149 884,160 905,151 925,139 947,142 967,130 987,124 1009,124 1030,118 1050,122 1070,127 1090,130 1110,124 1131,124" />
        <Pen c="#d7322a" pts="126,87 126,339" />
      </Plot>
      <Plot
        at="left-[769px] top-[680px] h-[120px] w-[356px]"
        cols="grid-cols-[27px_minmax(0,1fr)_7px]"
        title="Elevation per patch"
        y={["349", "0"]}
        x={["997", "m", "1032"]}
        box="267 444 743 252"
      >
        <g shapeRendering="crispEdges" fill="none" stroke="#000">
          {ELEVATION.map((t, i) => (
            <rect key={i} x={283 + i * 7.47} y={t} width="7.47" height={698 - t} vectorEffect="non-scaling-stroke" />
          ))}
        </g>
      </Plot>
      <Plot
        at="left-[1148px] top-[681px] h-[150px] w-[200px]"
        cols="grid-cols-[34px_minmax(0,1fr)_7px]"
        title="Biomass per patch"
        y={["2860", "0"]}
        x={["0", "g", "2190"]}
        box="1158 447 366 341"
      >
        <Pen pts="1158,478.5 1464,478.5" />
      </Plot>
      <Plot
        at="left-[1566px] top-[10px] h-[120px] w-[694px]"
        cols="grid-cols-[34px_minmax(0,1fr)_91px]"
        title="Crops biomass (patch mean)"
        y={["4070", "0", "g/m2"]}
        x={["0", "days", "2190"]}
        box="87 84 1245 252"
        legend={[["#e35d55", "wheat 1"], ["#5d7cba", "wheat 2"], ["#7ac168", "rice"], ["#a5a5a5", "barley"], ["#56a5cd", "pearl millet"]]}
      >
        <CropBiomass />
      </Plot>
      <Plot
        at="left-[1566px] top-[130px] h-[120px] w-[685px]"
        cols="grid-cols-[34px_minmax(0,1fr)_94px]"
        title="Crops yield (patch mean) and annual total precipitation"
        y={["1250", "0", "/m2 | m"]}
        x={["0", "years", "10"]}
        box="87 444 1219 252"
        legend={[["#000000", "annual RAIN"], ["#e35d55", "wheat 1"], ["#5d7cba", "wheat 2"], ["#7ac168", "rice"], ["#a5a5a5", "barley"]]}
      >
        <g shapeRendering="crispEdges">
          <Pen pts="88,696 88,613 211,613 211,696 211,577 331,577 331,696 331,523 454,523 454,696 454,595 574,595 574,696 574,628 697,628 697,696" />
        </g>
        <Pen c="#75bf63" pts="195,652 300,650 682,649" />
        <Pen c="#e0584f" pts="121,696 245,620 370,622 490,626 610,629" />
        <Pen c="#5a78b8" pts="121,696 245,616 370,619 490,622 610,625" />
        <Pen c="#a5a5a5" pts="121,696 243,604 370,604 490,609 610,613" />
        <Pen c="#4fa3cc" pts="195,631 245,631 370,626 490,624 682,623" />
        <Pen c="#f1f15a" pts="162,466 285,472 402,493 525,490 650,472" w={1.3} />
      </Plot>
      <Plot
        at="left-[1566px] top-[251px] h-[142px] w-[621px]"
        cols="grid-cols-[27px_minmax(0,1fr)_135px]"
        title="Ecological communities"
        y={["101", "-1"]}
        x={["0", "days", "2190"]}
        box="72 807 1004 318"
        legend={[["#23719c", "mean water (%)"], ["#c3bf27", "mean crop (%)"], ["#1ea079", "mean wood (%)"], ["#9f6f49", "mean brush (%)"], ["#2fd23c", "mean grass (%)"], ["#000000", "mean bare soil (%)"]]}
      >
        <rect x="72" y="810" width="838" height="12" fill="#23719c" />
        <rect x="72" y="821" width="838" height="154" fill="#c3bf27" />
        <path d="M76 818h18v4h-18zM120 819h14v3h-14zM478 819h24v3h-24zM757 819h5v3h-5zM810 819h8v3h-8z" fill="#c3bf27" />
        <rect x="72" y="975" width="838" height="58" fill="#1ea079" />
        <rect x="72" y="1032" width="838" height="51" fill="#9f6f49" />
        <path d="M72 965l8 10v3h-8zM337 1032h14v3h-14zM425 1032h12v3h-12zM513 1032h18v3h-18z" fill="#1ea079" />
        <rect x="72" y="1083" width="838" height="36" fill="#2fd23c" />
        <rect x="72" y="1119" width="838" height="3" fill="#000" />
      </Plot>
      <Plot
        at="left-[1566px] top-[393px] h-[120px] w-[663px]"
        cols="grid-cols-[30px_minmax(0,1fr)_169px]"
        title="Soil water content & ARID"
        y={["1.1", "-0.1"]}
        x={["0", "days", "2190"]}
        box="78 77 1015 209"
        legend={[["#000000", "mean ARID"], ["#345da9", "mean water content ratio"]]}
      >
        <Pen pts={arid()} />
        <Pen c="#345da9" pts={moisture()} />
      </Plot>
      <Plot
        at="left-[1566px] top-[513px] h-[120px] w-[550px]"
        cols="grid-cols-[31px_minmax(0,1fr)_56px]"
        title="Temperature"
        y={["51.3", "0", "ºC"]}
        x={["0", "days", "2190"]}
        box="81 377 1012 208"
        legend={[["#000000", "mean"], ["#345da9", "min"], ["#d7322a", "max"]]}
      >
        <Pen pts={season(1, 81, 924, 165, 482, 48, 18)} />
        <Pen c="#345da9" pts={season(2, 81, 924, 165, 508, 47, 22)} />
        <Pen c="#d7322a" pts={season(3, 81, 924, 165, 450, 47, 22)} />
      </Plot>
      <Plot
        at="left-[1566px] top-[634px] h-[120px] w-[498px]"
        cols="grid-cols-[31px_minmax(0,1fr)_7px]"
        title="Solar radiation"
        y={["31.7", "0", "MJ/m2"]}
        x={["0", "days", "2190"]}
        box="81 678 1006 208"
      >
        <Pen pts={season(4, 81, 917, 163, 772, 43, 50)} />
        <Pen pts="257,820 257,886" />
        <Pen pts="891,815 891,886" />
        <Pen pts="911,820 911,886" />
      </Plot>
      <Plot
        at="left-[1566px] top-[755px] h-[120px] w-[591px]"
        cols="grid-cols-[27px_minmax(0,1fr)_94px]"
        title="precipitation"
        y={["200", "0", "mm"]}
        x={["0", "days", "2190"]}
        box="72 979 1028 208"
        legend={[["#000000", "precipitation"], ["#d7322a", "mean ETr"]]}
      >
        <Bars list={RAIN} base={1187} />
        <Bars list={drizzle()} base={1187} />
        <Pen pts="72,1186 928,1186" w={1.5} />
        <Pen c="#d7322a" w={1.3} pts={season(8, 72, 928, 155, 1181, 3, 3)} />
      </Plot>
      <Plot
        at="left-[1566px] top-[876px] h-[120px] w-[233px]"
        cols="grid-cols-[31px_minmax(0,1fr)_7px]"
        title="year preciptation"
        y={["50.9", "0"]}
        x={["0", "", "456"]}
        box="81 1280 426 208"
      >
        <Bars
          base={1488}
          list={[[83, 1478], [92, 1462], [110, 1473], [132, 1462], [150, 1473], [155, 1480], [178, 1484], [210, 1484], [256, 1468], [258, 1472], [270, 1380], [287, 1422], [296, 1437], [302, 1462], [305, 1297], [317, 1282], [323, 1431], [326, 1450], [336, 1386], [350, 1419], [368, 1452], [379, 1473], [388, 1478], [406, 1483]]}
        />
        <Pen pts="81,1487 424,1487" w={1.4} />
      </Plot>
      <Plot
        at="left-[1800px] top-[876px] h-[120px] w-[256px]"
        cols="grid-cols-[28px_minmax(0,1fr)_7px]"
        title="cumulative year precipitation"
        y={["1.1", "-0.1"]}
        x={["0", "", "366"]}
        box="586 1280 483 208"
      >
        <Pen pts="588,1469 600,1469 600,1465 641,1465 641,1461 656,1461 656,1459 683,1459 683,1457 724,1457 724,1455 820,1455 820,1452 832,1452 832,1450 852,1450 852,1435 878,1435 878,1427 889,1427 889,1420 902,1417 902,1392 917,1392 920,1362 922,1340 928,1340 928,1333 935,1328 945,1328 947,1315 965,1315 965,1305 992,1305 992,1301 1008,1301 1008,1298 1067,1298" />
      </Plot>

      <CropSelection />
      <Output />
    </div>
  );
}
